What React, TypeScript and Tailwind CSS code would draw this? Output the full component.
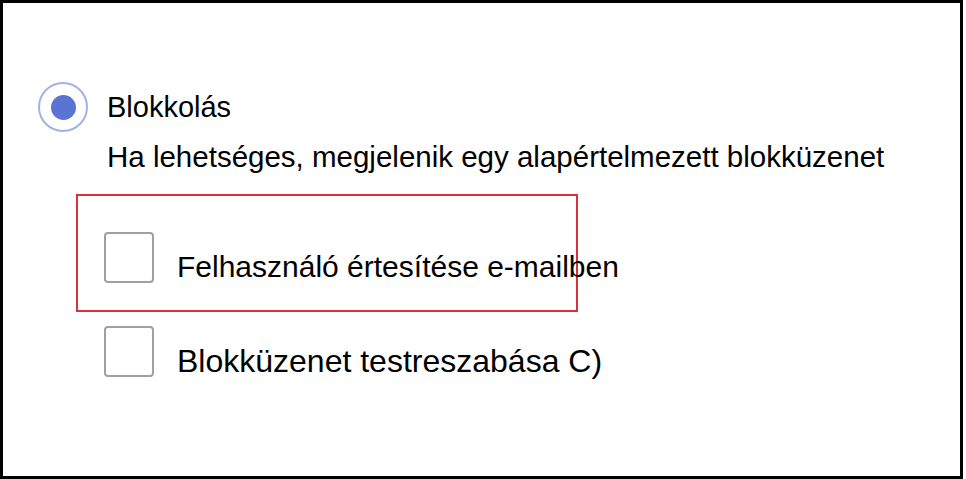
export default function App() {
  return (
    <div className="h-[479px] w-[966px] bg-white" style={{ fontFamily: '"Liberation Sans", Arial, sans-serif' }}>
      <div className="h-[479px] w-[963px] border-[3px] border-black text-black">
        <div className="flex flex-col pl-[35px] pt-[79px]">
          <label className="flex items-center gap-[19px]">
            <span className="flex h-[50px] w-[50px] items-center justify-center rounded-full border-2 border-[#a3b0ea]">
              <span className="h-[25px] w-[25px] rounded-full bg-[#5a74d4]" />
            </span>
            <span className="text-[29px] leading-none">Blokkolás</span>
          </label>
          <p className="ml-[69px] mt-[10px] whitespace-nowrap text-[29.5px] leading-none">
            Ha lehetséges, megjelenik egy alapértelmezett blokküzenet
          </p>
          <div className="ml-[38px] mt-[22px] flex h-[118px] w-[502px] items-start border-2 border-[#d7333f] pl-[26px] pt-[36px]">
            <div className="flex items-start gap-[23px]">
              <span className="h-[51px] w-[50px] shrink-0 rounded-[4px] border-2 border-[#a0a0a0]" />
              <span className="mt-[20px] whitespace-nowrap text-[30px] leading-none">Felhasználó értesítése e-mailben</span>
            </div>
          </div>
          <div className="ml-[66px] mt-[14px] flex items-start gap-[23px]">
            <span className="h-[51px] w-[50px] shrink-0 rounded-[4px] border-2 border-[#a0a0a0]" />
            <span className="mt-[19px] whitespace-nowrap text-[32px] leading-none">Blokküzenet testreszabása C)</span>
          </div>
        </div>
      </div>
    </div>
  );
}
